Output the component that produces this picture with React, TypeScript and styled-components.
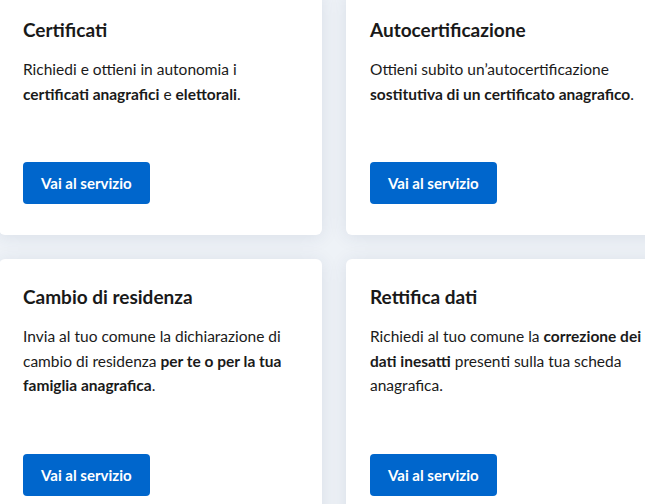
import React from "react";
import styled, { createGlobalStyle } from "styled-components";

const GlobalStyle = createGlobalStyle`
  html, body {
    margin: 0;
    padding: 0;
    background: #eef2f7;
    overflow: hidden;
  }
  body {
    font-family: "Lato", "Noto Sans", sans-serif;
    color: #1a1a1a;
  }
`;

const Grid = styled.div`
  display: grid;
  grid-template-columns: 323px 323px;
  gap: 24px;
  margin-top: -8px;
  margin-left: -1px;
`;

const Card = styled.div`
  background: #ffffff;
  border-radius: 6px;
  box-shadow: 0 2px 18px rgba(40, 60, 100, 0.1);
  padding: 24px 24px 31px 24px;
  display: flex;
  flex-direction: column;
  align-items: flex-start;
`;

const Title = styled.h3`
  margin: 0 0 13px;
  font-size: 19px;
  line-height: 28px;
  font-weight: 700;
  color: #191919;
`;

const Text = styled.p`
  margin: 0;
  font-size: 15.5px;
  line-height: 24.5px;
  color: #1a1a1a;

  strong {
    font-weight: 700;
  }
`;

const Button = styled.a`
  margin-top: 56px;
  display: inline-flex;
  align-items: center;
  justify-content: center;
  height: 42px;
  padding: 0 18px;
  box-sizing: border-box;
  background: #0066cc;
  color: #ffffff;
  border-radius: 4px;
  font-size: 15px;
  font-weight: 700;
  text-decoration: none;
`;

type Service = {
  title: string;
  body: React.ReactNode;
};

const services: Service[] = [
  {
    title: "Certificati",
    body: (
      <>
        Richiedi e ottieni in autonomia i <strong>certificati anagrafici</strong> e{" "}
        <strong>elettorali</strong>.
      </>
    ),
  },
  {
    title: "Autocertificazione",
    body: (
      <>
        Ottieni subito un’autocertificazione{" "}
        <strong>sostitutiva di un certificato anagrafico</strong>.
      </>
    ),
  },
  {
    title: "Cambio di residenza",
    body: (
      <>
        Invia al tuo comune la dichiarazione di cambio di residenza{" "}
        <strong>per te o per la tua famiglia anagrafica</strong>.
      </>
    ),
  },
  {
    title: "Rettifica dati",
    body: (
      <>
        Richiedi al tuo comune la <strong>correzione dei dati inesatti</strong>{" "}
        presenti sulla tua scheda anagrafica.
      </>
    ),
  },
];

export default function App() {
  return (
    <>
      <GlobalStyle />
      <Grid>
        {services.map((s) => (
          <Card key={s.title}>
            <Title>{s.title}</Title>
            <Text>{s.body}</Text>
            <Button href="#">Vai al servizio</Button>
          </Card>
        ))}
      </Grid>
    </>
  );
}
